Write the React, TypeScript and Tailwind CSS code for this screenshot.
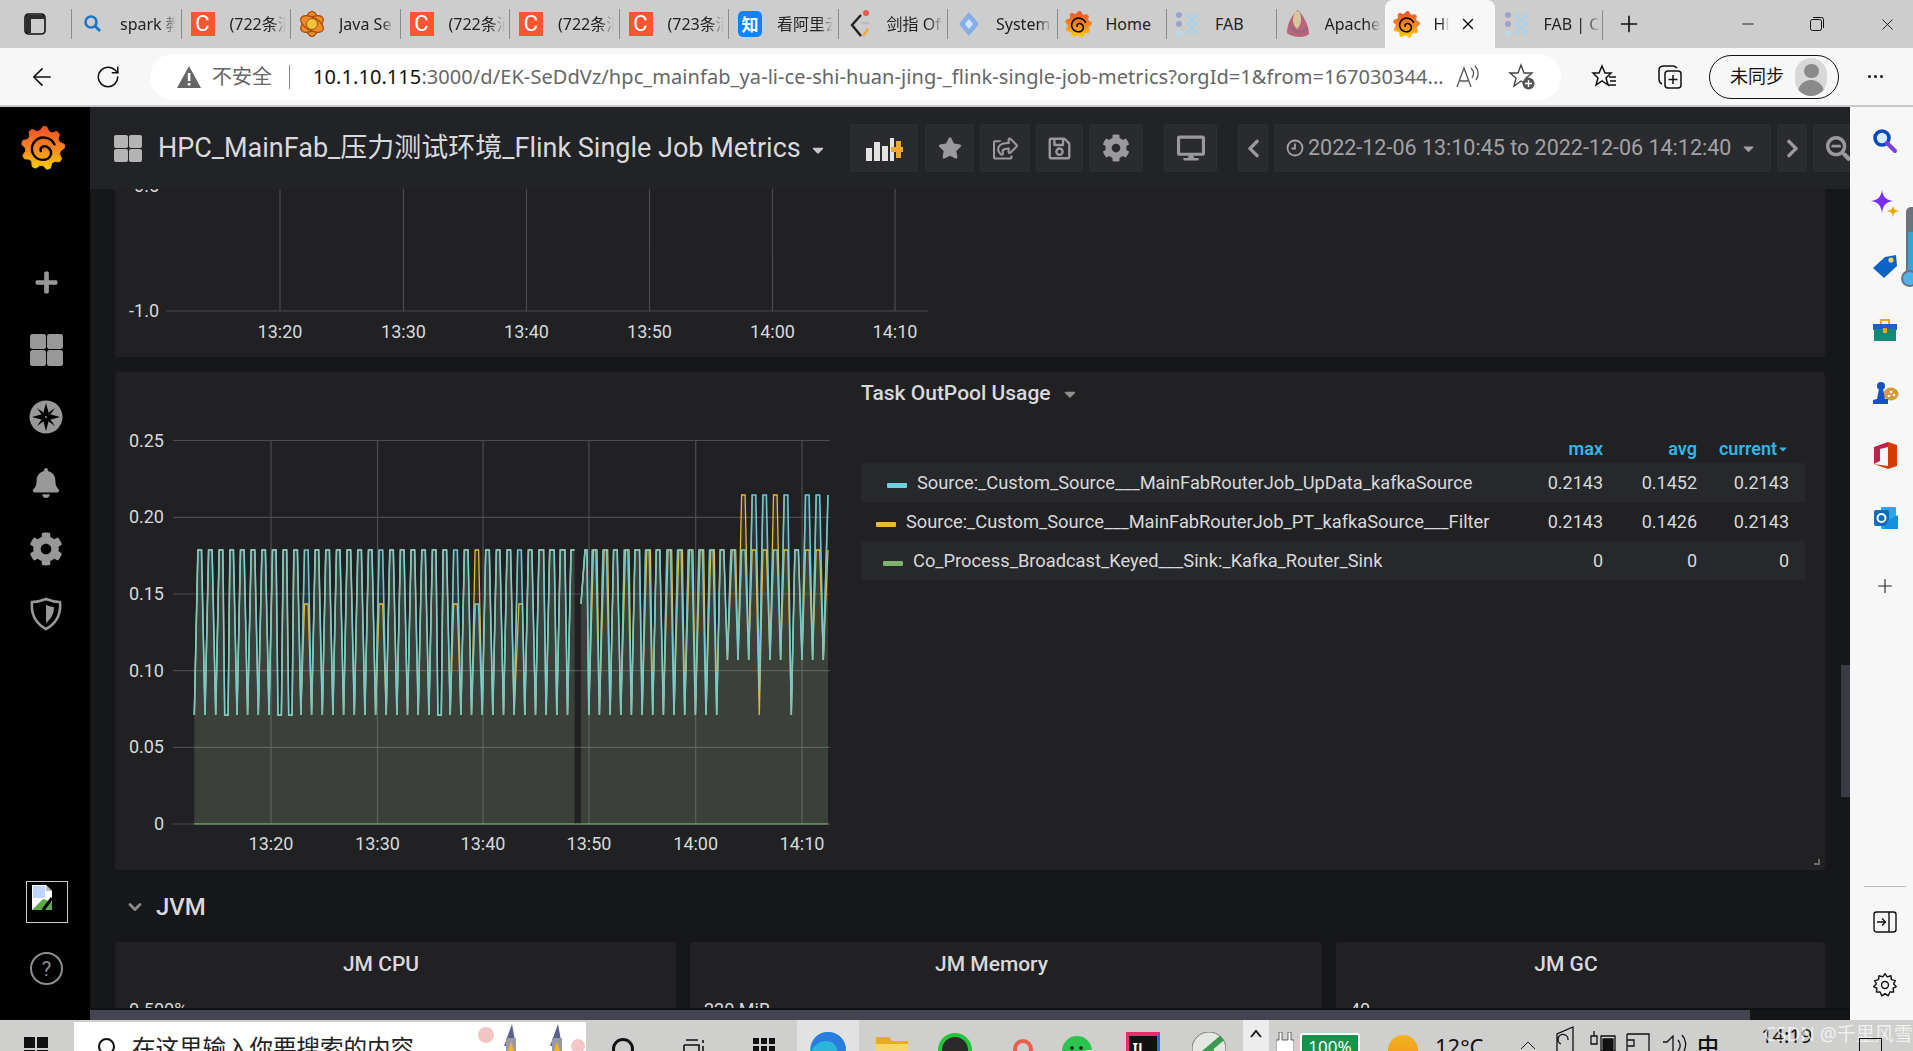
import React from "react";
import { ArrowLeft, RotateCw, Plus, Minus, X, ChevronDown } from "lucide-react";
import { FaStar, FaRegShareSquare, FaRegSave, FaCog, FaDesktop, FaChevronLeft, FaChevronRight, FaSearchMinus, FaBell, FaPlus, FaCaretDown } from "react-icons/fa";

const P = 10.66, X0 = 194.35, YL = 715, YH = 550, YM = 604, YT = 495, YL2 = 660;
const lowPlateau = new Set([3, 8, 9, 23]);
const yShift = new Set([30, 37, 38, 40, 42, 44, 45, 46, 47, 48, 50]);
const wide = new Set([32, 33, 34, 41]);

type Pt = [number, number];
function series(kind: "c" | "y"): Pt[][] {
  const a: Pt[] = [];
  const b: Pt[] = [];
  for (let k = 0; k < 60; k++) {
    if (k === 36) continue;
    const target = k < 36 ? a : b;
    const x = X0 + k * P;
    let low = k >= 50 && k !== 53 && k !== 56 ? YL2 : YL;
    if (kind === "c" && k === 53) low = 690;
    let hi = YH;
    if (kind === "c" && [52, 53, 55, 57, 58, 59].includes(k)) hi = YT;
    if (kind === "y" && [51, 54].includes(k)) hi = YT;
    if (kind === "y" && [10, 17, 24, 30].includes(k)) hi = YM;
    if (kind === "c" && k === 26) hi = YM;
    if (k === 37) b.push([581, YM], [585, YH], [587, YH]);
    if (lowPlateau.has(k)) target.push([x - 1.6, low], [x + 1.8, low]);
    else target.push([x, low]);
    const s = kind === "y" && yShift.has(k) ? 1.2 : 0;
    if (k === 59) {
      target.push([828, hi]);
    } else {
      target.push([x + P / 3 + s, hi], [x + (2 * P) / 3 + s + (wide.has(k) ? 1 : 0), hi]);
    }
  }
  return [a, b];
}
const OX = 115, OY = 372;
const toLine = (pts: Pt[]) => pts.map(([x, y]) => `${(x - OX).toFixed(1)},${y - OY}`).join(" ");
const toArea = (pts: Pt[]) =>
  `${(pts[0][0] - OX).toFixed(1)},${824 - OY} ${toLine(pts)} ${(pts[pts.length - 1][0] - OX).toFixed(1)},${824 - OY}`;
const rising = (pts: Pt[]) => {
  let d = "";
  for (let i = 1; i < pts.length; i++) {
    if (pts[i][1] < pts[i - 1][1]) d += `M${(pts[i - 1][0] - OX).toFixed(1)} ${pts[i - 1][1] - OY}L${(pts[i][0] - OX).toFixed(1)} ${pts[i][1] - OY}`;
  }
  return d;
};

function TaskChart() {
  const cyan = series("c");
  const yellow = series("y");
  const ys: [string, number][] = [["0.25", 440.5], ["0.20", 517.3], ["0.15", 594], ["0.10", 670.7], ["0.05", 747.3], ["0", 824]];
  const xs: [string, number][] = [["13:20", 271], ["13:30", 377.5], ["13:40", 483], ["13:50", 589], ["14:00", 695.7], ["14:10", 802]];
  return (
    <svg width="740" height="498" className="shrink-0">
      {ys.map(([t, y]) => (
        <g key={t}>
          <line x1={173 - OX} x2={830 - OX} y1={y - OY} y2={y - OY} stroke="#4c4c4e" strokeWidth="1.2" />
          <text x={164 - OX} y={y - OY + 6} textAnchor="end" fontSize="18" fill="#d8d9da">{t}</text>
        </g>
      ))}
      {xs.map(([t, x]) => (
        <g key={t}>
          <line x1={x - OX} x2={x - OX} y1={441 - OY} y2={824 - OY} stroke="#4c4c4e" strokeWidth="1.2" />
          <text x={x - OX} y={850 - OY} textAnchor="middle" fontSize="18" fill="#d8d9da">{t}</text>
        </g>
      ))}
      {yellow.map((p, i) => <polygon key={i} points={toArea(p)} fill="#eab839" fillOpacity="0.1" />)}
      {cyan.map((p, i) => <polygon key={i} points={toArea(p)} fill="#6ed0e0" fillOpacity="0.11" />)}
      {yellow.map((p, i) => <polyline key={i} points={toLine(p)} fill="none" stroke="#eab839" strokeWidth="1.3" />)}
      {cyan.map((p, i) => <polyline key={i} points={toLine(p)} fill="none" stroke="#6ed0e0" strokeWidth="1.6" strokeOpacity="0.95" />)}
      {cyan.map((p, i) => <path key={i} d={rising(p)} fill="none" stroke="#7fc4ae" strokeWidth="1.3" strokeOpacity="0.75" />)}
      <line x1={194 - OX} x2={828 - OX} y1={824 - OY} y2={824 - OY} stroke="#7eb26d" strokeWidth="1.2" />
    </svg>
  );
}

function TopChart() {
  const xs: [string, number][] = [["13:20", 280], ["13:30", 403.5], ["13:40", 526.5], ["13:50", 649.5], ["14:00", 772.5], ["14:10", 895]];
  return (
    <svg width="900" height="168">
      <text x="44" y="3" textAnchor="end" fontSize="18" fill="#d8d9da">-0.5</text>
      <text x="44" y="128" textAnchor="end" fontSize="18" fill="#d8d9da">-1.0</text>
      <line x1="51" x2="813" y1="122" y2="122" stroke="#4c4c4e" strokeWidth="1.2" />
      {xs.map(([t, x]) => (
        <g key={t}>
          <line x1={x - 115} x2={x - 115} y1="0" y2="122" stroke="#4c4c4e" strokeWidth="1.2" />
          <text x={x - 115} y="149" textAnchor="middle" fontSize="18" fill="#d8d9da">{t}</text>
        </g>
      ))}
    </svg>
  );
}

function GrafanaLogo({ size, id }: { size: number; id: string }) {
  const pts: string[] = [];
  const n = 9;
  for (let i = 0; i < n * 4; i++) {
    const a = (i / (n * 4)) * Math.PI * 2 - Math.PI / 2;
    const r = i % 4 === 0 || i % 4 === 1 ? 49 : 40;
    pts.push(`${(50 + r * Math.cos(a)).toFixed(1)},${(50 + r * Math.sin(a)).toFixed(1)}`);
  }
  return (
    <svg width={size} height={size} viewBox="0 0 100 100">
      <defs>
        <linearGradient id={id} x1="0" y1="0" x2="0" y2="1">
          <stop offset="0" stopColor="#f0512a" />
          <stop offset="0.55" stopColor="#f68a1f" />
          <stop offset="1" stopColor="#fcd00a" />
        </linearGradient>
      </defs>
      <polygon points={pts.join(" ")} fill={`url(#${id})`} stroke={`url(#${id})`} strokeWidth="2" strokeLinejoin="round" />
      <path d="M76 42 C68 24 42 20 29 38 C18 56 30 77 50 77 C67 77 74 60 63 50 C54 42 42 47 45 57" fill="none" stroke="#000" strokeWidth="5.5" strokeLinecap="round" />
    </svg>
  );
}

function GridIcon({ cls, gap }: { cls: string; gap: string }) {
  return (
    <div className={`grid grid-cols-2 ${gap}`}>
      <span className={cls} />
      <span className={cls} />
      <span className={cls} />
      <span className={cls} />
    </div>
  );
}

function CIcon() {
  return <div className="w-6 h-6 bg-[#fc5531] flex items-center justify-center text-white text-[22px] leading-none font-[Roboto,sans-serif]">C</div>;
}
function FabIcon() {
  return (
    <svg width="24" height="26" viewBox="0 0 24 26">
      <circle cx="3" cy="4" r="3" fill="#9aa3c9" />
      <circle cx="3" cy="13" r="3" fill="#9aa3c9" />
      <circle cx="3" cy="22" r="3" fill="#b9d7e6" />
      {[[12, 5], [20, 5], [12, 13], [20, 13], [12, 21], [20, 21], [16, 9], [16, 17]].map(([x, y], i) => (
        <circle key={i} cx={x} cy={y} r="2.4" fill="#a9d3e6" />
      ))}
    </svg>
  );
}
function TabIcon({ t, id }: { t: string; id?: string }) {
  if (t === "search")
    return (
      <svg width="20" height="20" viewBox="0 0 20 20">
        <circle cx="8" cy="8" r="5.5" fill="none" stroke="#1b76c9" strokeWidth="2.6" />
        <path d="M12 12 L17 17" stroke="#1b76c9" strokeWidth="2.8" />
      </svg>
    );
  if (t === "c") return <CIcon />;
  if (t === "java")
    return (
      <svg width="24" height="26" viewBox="0 0 24 26">
        {[0, 60, 120].map((r) => (
          <ellipse key={r} cx="12" cy="13" rx="6.5" ry="12.5" fill="#f08a2a" stroke="#a8480f" strokeWidth="1.2" transform={`rotate(${r} 12 13)`} />
        ))}
        <circle cx="12" cy="13" r="5.5" fill="#f6c23a" stroke="#8a5a14" />
      </svg>
    );
  if (t === "zhi")
    return <div className="w-6 h-[26px] rounded-[5px] bg-[#0a84ff] flex items-center justify-center text-white text-[17px] leading-none font-bold">知</div>;
  if (t === "jz")
    return (
      <svg width="22" height="30" viewBox="0 0 22 30">
        <path d="M12 6 L3 16 L12 27" fill="none" stroke="#222" strokeWidth="2.4" />
        <circle cx="17" cy="4" r="3" fill="#e8574a" />
        <path d="M12 14 H20" stroke="#bbb" strokeWidth="2.4" />
        <path d="M14 27 L19 20" stroke="#f0a83a" strokeWidth="2.6" />
      </svg>
    );
  if (t === "sys")
    return (
      <svg width="22" height="26" viewBox="0 0 22 26">
        <path d="M11 1 L21 13 L11 25 L1 13 Z" fill="#84aee8" />
        <path d="M11 8 L15 13 L11 18 L7 13 Z" fill="#d4e3f8" />
      </svg>
    );
  if (t === "graf") return <GrafanaLogo size={27} id={id || "tg"} />;
  if (t === "fab") return <FabIcon />;
  if (t === "apache")
    return (
      <svg width="26" height="30" viewBox="0 0 26 30">
        <path d="M13 1 C7 6 2 14 2 24 C8 29 20 29 24 25 C24 16 18 6 13 1 Z" fill="#b8657c" />
        <path d="M10 3 C7 10 7 15 12 20 C17 15 17 8 14 2 Z" fill="#d8c69a" />
        <path d="M6 18 C10 24 16 24 22 20" fill="none" stroke="#8f6a86" strokeWidth="2" />
      </svg>
    );
  return null;
}

const tabs = [
  { i: "search", t: "spark 教程" },
  { i: "c", t: "(722条消息)" },
  { i: "java", t: "Java Se 8" },
  { i: "c", t: "(722条消息)" },
  { i: "c", t: "(722条消息)" },
  { i: "c", t: "(723条消息)" },
  { i: "zhi", t: "看阿里云" },
  { i: "jz", t: "剑指 Off" },
  { i: "sys", t: "System" },
  { i: "graf", t: "Home" },
  { i: "fab", t: "FAB" },
  { i: "apache", t: "Apache" },
];

function Tab({ i, t, fade = true, sep = true, id }: { i: string; t: string; fade?: boolean; sep?: boolean; id?: string }) {
  return (
    <div className="w-[109.5px] h-12 shrink-0 flex items-center relative">
      {sep ? <span className="w-px h-[30px] bg-[#8b8b8b] shrink-0" /> : <span className="w-px shrink-0" />}
      <span className="w-[42px] flex justify-center shrink-0"><TabIcon t={i} id={id} /></span>
      <span className={`ml-[6px] w-[56px] overflow-hidden whitespace-nowrap text-[16px] text-[#222] ${fade ? "[mask-image:linear-gradient(90deg,#000_75%,transparent)]" : ""}`}>{t}</span>
    </div>
  );
}

function TabBar() {
  return (
    <div className="h-12 bg-[#cdcdcd] flex items-start shrink-0 [font-family:'Noto_Sans','Noto_Sans_CJK_SC',sans-serif]">
      <div className="w-[71px] h-12 flex items-center justify-center shrink-0">
        <svg width="24" height="24" viewBox="0 0 24 24" fill="none" className="mr-[1px]">
          <rect x="2" y="2" width="20" height="20" rx="3.5" stroke="#111" strokeWidth="1.6" />
          <path d="M3 3 H21 V7 H3 Z M3 7 H8 V21 H3 Z" fill="#111" fillOpacity="0.85" />
        </svg>
      </div>
      {tabs.map((x, n) => <Tab key={n} i={x.i} t={x.t} id={`tg${n}`} fade={x.t !== "Home" && x.t !== "FAB"} />)}
      <div className="w-[110px] h-12 bg-[#f7f7f7] rounded-t-[8px] flex items-center shrink-0 -ml-[0.5px] [font-family:'Noto_Sans',sans-serif]">
        <span className="w-[42px] flex justify-center shrink-0 ml-[1px]"><TabIcon t="graf" id="tgActive" /></span>
        <span className="ml-[6px] w-[15px] overflow-hidden whitespace-nowrap text-[16px] text-[#222] [mask-image:linear-gradient(90deg,#000_50%,transparent)]">HPC</span>
        <X size={18} strokeWidth={1.8} className="text-[#111] ml-[10px]" />
      </div>
      <Tab i="fab" t="FAB | Conf" sep={false} />
      <span className="w-px h-[30px] bg-[#8b8b8b] mt-[10px] -ml-[2px] shrink-0" />
      <Plus size={26} strokeWidth={1.5} className="text-[#111] ml-[13px] mt-[11px] shrink-0" />
      <Minus size={18} strokeWidth={1.2} className="text-[#111] ml-[97px] mt-[15px] shrink-0" />
      <svg width="16" height="16" viewBox="0 0 16 16" fill="none" className="ml-[52px] mt-[16px] shrink-0">
        <rect x="1.5" y="3.5" width="11" height="11" rx="2" stroke="#111" />
        <path d="M4 1.5 H12.5 A2 2 0 0 1 14.5 3.5 V12" stroke="#111" />
      </svg>
      <X size={19} strokeWidth={1.1} className="text-[#111] ml-[53px] mt-[15px] shrink-0" />
    </div>
  );
}

function AddressBar() {
  return (
    <div className="h-[57px] bg-[#f7f7f7] flex items-center shrink-0 [font-family:'Noto_Sans','Noto_Sans_CJK_SC',sans-serif]">
      <ArrowLeft size={28} strokeWidth={1.4} className="text-[#111] ml-[28px] shrink-0" />
      <RotateCw size={26} strokeWidth={1.4} className="text-[#111] ml-[39px] shrink-0" />
      <div className="ml-[29px] w-[1411px] h-[46px] rounded-full bg-white flex items-center shrink-0">
        <svg width="26" height="24" viewBox="0 0 26 24" className="ml-[26px] shrink-0">
          <path d="M13 1 L25 23 H1 Z" fill="#666" />
          <rect x="11.8" y="8" width="2.6" height="8" fill="#fff" />
          <rect x="11.8" y="18" width="2.6" height="2.6" fill="#fff" />
        </svg>
        <span className="ml-[10px] text-[20px] text-[#666] whitespace-nowrap">不安全</span>
        <span className="ml-[17px] w-px h-[24px] bg-[#888]" />
        <span className="ml-[23px] w-[1132px] shrink-0 text-[20px] whitespace-nowrap overflow-hidden text-[#666] tracking-[0.07px]">
          <span className="text-[#111]">10.1.10.115</span>:3000/d/EK-SeDdVz/hpc_mainfab_ya-li-ce-shi-huan-jing-_flink-single-job-metrics?orgId=1&amp;from=167030344...
        </span>
        <svg width="26" height="24" viewBox="0 0 26 24" fill="none" stroke="#555" strokeWidth="1.3" className="ml-[10px] shrink-0">
          <path d="M2 22 L9 3 L16 22 M5 16 H13" />
          <path d="M16 3 C19 6 19 10 17 13 M20 1 C24 5 24 11 21 15" />
        </svg>
        <svg width="28" height="28" viewBox="0 0 28 28" fill="none" stroke="#444" strokeWidth="1.4" className="ml-[27px] shrink-0">
          <path d="M13 2 L16 10 H24 L18 15 L20 23 L13 18 L6 23 L8 15 L2 10 H10 Z" />
          <circle cx="20.5" cy="20.5" r="6" fill="#555" stroke="none" />
          <path d="M20.5 17 V24 M17 20.5 H24" stroke="#fff" />
        </svg>
      </div>
      <svg width="28" height="28" viewBox="0 0 28 28" fill="none" stroke="#111" strokeWidth="1.5" className="ml-[29px] shrink-0">
        <path d="M12 3 L15 10 H21 L16 15 L18 22 L12 18 L6 22 L8 15 L3 10 H9 Z" />
        <path d="M19 14 H26 M20 18 H26 M18 22 H26" />
      </svg>
      <svg width="28" height="28" viewBox="0 0 28 28" fill="none" stroke="#111" strokeWidth="1.5" className="ml-[38px] shrink-0">
        <rect x="9" y="8" width="16" height="17" rx="3" />
        <path d="M6 21 C4 20 3 18 3 16 V7 C3 4 5 3 8 3 H17 C19 3 20 4 21 5" />
        <path d="M17 12 V21 M12.5 16.5 H21.5" />
      </svg>
      <div className="ml-[25px] w-[130px] h-[44px] rounded-full border-[1.5px] border-[#111] flex items-center shrink-0">
        <span className="ml-[20px] text-[18px] text-[#111] whitespace-nowrap">未同步</span>
        <span className="ml-[11px] w-[32px] h-[38px] rounded-full bg-[#d8d8d8] flex flex-col items-center justify-start overflow-hidden">
          <span className="w-[15px] h-[15px] rounded-full bg-[#8a8a8a] mt-[6px]" />
          <span className="w-[26px] h-[16px] rounded-t-full bg-[#8a8a8a] mt-[2px]" />
        </span>
      </div>
      <span className="ml-[29px] flex gap-[3px] shrink-0">
        <span className="w-[3px] h-[3px] rounded-full bg-[#111]" />
        <span className="w-[3px] h-[3px] rounded-full bg-[#111]" />
        <span className="w-[3px] h-[3px] rounded-full bg-[#111]" />
      </span>
    </div>
  );
}

function Compass() {
  return (
    <svg width="34" height="34" viewBox="0 0 34 34">
      <circle cx="17" cy="17" r="16.5" fill="#989898" />
      <path d="M17 3 L20 14 L31 17 L20 20 L17 31 L14 20 L3 17 L14 14 Z" fill="#000" />
      <path d="M8 8 L15 13 L13 15 Z M26 8 L21 15 L19 13 Z M8 26 L13 19 L15 21 Z M26 26 L19 21 L21 19 Z" fill="#000" />
      <circle cx="17" cy="17" r="1" fill="#989898" />
    </svg>
  );
}
function Shield() {
  return (
    <svg width="32" height="34" viewBox="0 0 32 34">
      <path d="M16 2 C21 4 26 5 30 5 C31 16 27 26 16 32 C5 26 1 16 2 5 C6 5 11 4 16 2 Z" fill="none" stroke="#989898" strokeWidth="2.6" />
      <path d="M16 8 C19 9 22 10 24 10 C24 17 21 22 16 26 Z" fill="#989898" />
    </svg>
  );
}

function SideNav() {
  const cell = "flex items-center justify-center shrink-0 text-[#989898] pl-[2px]";
  return (
    <div className="w-[90px] bg-black flex flex-col items-stretch shrink-0">
      <div className="mt-[19px] flex justify-center pr-[4px]"><GrafanaLogo size={44} id="logo-main" /></div>
      <div className="mt-[78px]" />
      <div className={`${cell} h-[68px]`}><FaPlus size={25} /></div>
      <div className={`${cell} h-[67px]`}><GridIcon cls="w-[16px] h-[15.5px] bg-[#989898] rounded-[2.5px]" gap="gap-[1px]" /></div>
      <div className={`${cell} h-[67px]`}><Compass /></div>
      <div className={`${cell} h-[66px]`}><FaBell size={30} /></div>
      <div className={`${cell} h-[65px]`}><FaCog size={34} /></div>
      <div className={`${cell} h-[66px]`}><Shield /></div>
      <div className="mt-auto flex flex-col items-center pb-[35px] pl-[3px]">
        <div className="w-[42px] h-[42px] border border-[#ccc] p-[2px]">
          <svg width="26" height="28" viewBox="0 0 26 28">
            <path d="M3 1 H17 L23 7 V26 H3 Z" fill="#fff" />
            <path d="M17 1 L23 7 H17 Z" fill="#bbb" />
            <path d="M4 2 H16 V14 H4 Z" fill="#bcd4f5" />
            <path d="M3 26 L14 15 L23 18 V26 Z" fill="#5fa84a" />
            <path d="M14 26 L23 14" stroke="#000" strokeWidth="3" />
          </svg>
        </div>
        <div className="mt-[29px] w-[33px] h-[33px] rounded-full border-2 border-[#8e8e8e] flex items-center justify-center text-[#8e8e8e] text-[20px] leading-none">?</div>
      </div>
    </div>
  );
}

const btn = "h-12 rounded-[3px] bg-[#2a2b2e] border border-[#2e2f32] flex items-center justify-center text-[#9a9a9c] shrink-0";

function NavBar() {
  return (
    <div className="h-[82px] bg-[#212327] flex items-center shrink-0 overflow-hidden">
      <div className="ml-[24px] w-[28px] shrink-0"><GridIcon cls="w-[13.5px] h-[13px] bg-[#b4b4b4] rounded-[2px]" gap="gap-[1px]" /></div>
      <div className="ml-[16px] w-[692px] shrink-0 flex items-center text-[#d8d9da]">
        <span className="text-[27px] whitespace-nowrap">HPC_MainFab_压力测试环境_Flink Single Job Metrics</span>
        <FaCaretDown size={18} className="ml-[8px] mt-[4px] text-[#c8c8c8]" />
      </div>
      <div className={`${btn} w-[68px]`}>
        <svg width="38" height="28" viewBox="0 0 38 28">
          <path d="M1 14 H7 V27 H1 Z M9 8 H15 V27 H9 Z M17 12 H23 V27 H17 Z M25 4 H29 V27 H25 Z" fill="#e3e3e3" />
          <path d="M26 13 H31 V7 H36 V13 H38 V18 H36 V24 H31 V18 H26 Z" fill="#f0a82e" />
        </svg>
      </div>
      <div className={`${btn} w-[49px] ml-[7px]`}><FaStar size={24} /></div>
      <div className={`${btn} w-[50px] ml-[6px]`}><FaRegShareSquare size={25} /></div>
      <div className={`${btn} w-[47px] ml-[6px]`}><FaRegSave size={25} /></div>
      <div className={`${btn} w-[54px] ml-[6px]`}><FaCog size={28} /></div>
      <div className={`${btn} w-[53px] ml-[21px]`}><FaDesktop size={28} /></div>
      <div className={`${btn} w-[30px] ml-[21px]`}><FaChevronLeft size={21} /></div>
      <div className={`${btn} w-[497px] ml-[6px] !justify-start`}>
        <svg width="18" height="18" viewBox="0 0 18 18" fill="none" stroke="#a2a2a4" strokeWidth="1.8" className="ml-[11px] shrink-0">
          <circle cx="9" cy="9" r="7.5" />
          <path d="M9 4.5 V9.5 H5.5" />
        </svg>
        <span className="ml-[4px] text-[21.5px] text-[#a2a2a4] whitespace-nowrap">2022-12-06 13:10:45 to 2022-12-06 14:12:40</span>
        <FaCaretDown size={17} className="ml-[9px] text-[#a2a2a4]" />
      </div>
      <div className={`${btn} w-[30px] ml-[6px]`}><FaChevronRight size={21} /></div>
      <div className={`${btn} w-[60px] ml-[6px] !justify-start pl-[12px]`}><FaSearchMinus size={25} /></div>
    </div>
  );
}

const legend = [
  { c: "bg-[#6ed0e0]", n: "Source:_Custom_Source___MainFabRouterJob_UpData_kafkaSource", max: "0.2143", avg: "0.1452", cur: "0.2143", pl: "pl-[26px]", bg: "bg-[#27282b]" },
  { c: "bg-[#eab839]", n: "Source:_Custom_Source___MainFabRouterJob_PT_kafkaSource___Filter", max: "0.2143", avg: "0.1426", cur: "0.2143", pl: "pl-[15px]", bg: "" },
  { c: "bg-[#7eb26d]", n: "Co_Process_Broadcast_Keyed___Sink:_Kafka_Router_Sink", max: "0", avg: "0", cur: "0", pl: "pl-[22px]", bg: "bg-[#27282b]" },
];

function Legend() {
  return (
    <div className="flex-1 pl-[6px] pr-[20px] text-[#d8d9da] text-[18px]">
      <div className="h-[44px] flex items-center">
        <span className="text-[21px] font-medium">Task OutPool Usage</span>
        <FaCaretDown size={18} className="ml-[10px] text-[#8e8e8e]" />
      </div>
      <div className="h-[47px] flex items-end justify-end pr-[16px] pb-[1px] text-[#33b5e5] font-semibold">
        <span className="w-[60px] text-right">max</span>
        <span className="w-[94px] text-right">avg</span>
        <span className="w-[92px] flex items-center justify-end"><span>current</span><FaCaretDown size={12} /></span>
      </div>
      {legend.map((r) => (
        <div key={r.n} className={`h-[39px] flex items-center ${r.bg}`}>
          <div className={`w-[648px] shrink-0 flex items-center ${r.pl}`}>
            <span className={`w-[20px] h-[5px] rounded-[1px] mt-[5px] shrink-0 ${r.c}`} />
            <span className="ml-[10px] whitespace-nowrap text-[18.3px]">{r.n}</span>
          </div>
          <span className="w-[94px] text-right">{r.max}</span>
          <span className="w-[94px] text-right">{r.avg}</span>
          <span className="w-[92px] text-right">{r.cur}</span>
        </div>
      ))}
    </div>
  );
}

function SmallPanel({ w, title, val }: { w: string; title: string; val: string }) {
  return (
    <div className={`${w} shrink-0 h-[66px] bg-[#212124] rounded-t-[3px] relative overflow-hidden`}>
      <div className="text-center text-[21px] font-medium text-[#d8d9da] pt-[7px] pr-[29px]">{title}</div>
      <div className="absolute left-[14px] top-[59px] text-[18px] leading-none text-[#d8d9da]">{val}</div>
    </div>
  );
}

function Content() {
  return (
    <div className="flex-1 bg-[#161719] overflow-hidden pl-[25px] pr-[25px] relative">
      <div className="h-[168px] bg-[#212124] rounded-b-[3px] overflow-hidden"><TopChart /></div>
      <div className="mt-[15px] h-[498px] bg-[#212124] rounded-[3px] flex relative">
        <TaskChart />
        <Legend />
        <span className="absolute right-[5px] bottom-[5px] w-[6px] h-[6px] border-r-2 border-b-2 border-[#6a6a6a]" />
      </div>
      <div className="h-[72px] flex items-center pt-[2px] text-[#d8d9da]">
        <ChevronDown size={20} strokeWidth={3.5} className="text-[#8a8a8a] ml-[10px]" />
        <span className="ml-[11px] text-[24px] font-medium leading-none">JVM</span>
      </div>
      <div className="flex gap-[14px]">
        <SmallPanel w="w-[561px]" title="JM CPU" val="0.500%" />
        <SmallPanel w="w-[632px]" title="JM Memory" val="220 MiB" />
        <SmallPanel w="w-[489px]" title="JM GC" val="40" />
      </div>
      <span className="absolute right-0 top-[476px] w-[9px] h-[132px] bg-[#3a3b44]" />
    </div>
  );
}

function RS({ children }: { children: React.ReactNode }) {
  return <div className="h-[62.8px] flex items-center justify-center shrink-0 pl-[7px]">{children}</div>;
}

function RightBar() {
  return (
    <div className="w-[63px] bg-[#f7f7f7] flex flex-col shrink-0 relative pt-[3px] overflow-hidden">
      <RS>
        <svg width="26" height="26" viewBox="0 0 26 26">
          <circle cx="10" cy="10" r="7" fill="#d7ecff" stroke="#0d47c0" strokeWidth="3.6" />
          <path d="M15 15 L23 23" stroke="#7b3fd6" strokeWidth="4" strokeLinecap="round" />
        </svg>
      </RS>
      <RS>
        <svg width="28" height="28" viewBox="0 0 28 28">
          <path d="M11 0 C12 7 15 10 22 11 C15 12 12 15 11 23 C10 15 7 12 0 11 C7 10 10 7 11 0 Z" fill="#7a2ff0" />
          <path d="M22 15 C22.5 19 23.5 20 28 21 C23.5 22 22.5 23 22 28 C21.5 23 20.5 22 16 21 C20.5 20 21.5 19 22 15 Z" fill="#f0a400" />
        </svg>
      </RS>
      <RS>
        <svg width="26" height="26" viewBox="0 0 26 26">
          <path d="M1 14 L13 3 L24 1 L25 12 L12 24 Z" fill="#0c63c7" />
          <circle cx="19" cy="6" r="2.6" fill="#f7d15a" />
        </svg>
      </RS>
      <RS>
        <svg width="26" height="24" viewBox="0 0 26 24">
          <path d="M9 6 V2 H17 V6" fill="none" stroke="#e8a91c" strokeWidth="2" />
          <rect x="1" y="6" width="24" height="6" fill="#1c5fc9" />
          <rect x="2" y="11" width="22" height="12" fill="#12897b" />
          <rect x="11" y="10" width="4" height="5" fill="#f1a51c" />
        </svg>
      </RS>
      <RS>
        <svg width="28" height="24" viewBox="0 0 28 24">
          <ellipse cx="20" cy="13" rx="7.5" ry="6.5" fill="#d69a3a" />
          <circle cx="10" cy="5" r="4" fill="#1553c4" />
          <path d="M8 8 H12 L14 18 H17 V23 H2 V19 L6 18 Z" fill="#1553c4" />
          <circle cx="20" cy="11" r="1.3" fill="#fff" /><circle cx="23" cy="14" r="1.3" fill="#fff" /><circle cx="18" cy="15" r="1.3" fill="#fff" />
        </svg>
      </RS>
      <RS>
        <svg width="24" height="29" viewBox="0 0 24 29">
          <path d="M15 1 L24 4 V25 L15 28 L1 23 L15 25 Z" fill="#d83b01" />
          <path d="M15 1 L1 6 V23 L7 20 V8 L15 6 Z" fill="#c4204c" />
        </svg>
      </RS>
      <RS>
        <svg width="25" height="24" viewBox="0 0 25 24">
          <rect x="8" y="1" width="15" height="22" rx="1" fill="#28a8ea" />
          <rect x="1" y="4" width="15" height="16" rx="2" fill="#0f6cbd" />
          <circle cx="8.5" cy="12" r="4" fill="none" stroke="#fff" strokeWidth="2" />
          <path d="M16 14 L25 9 V23 H10 Z" fill="#1490df" />
        </svg>
      </RS>
      <div className="h-[72px] flex items-center justify-center shrink-0 pl-[7px]"><Plus size={22} strokeWidth={1.2} className="text-[#222]" /></div>
      <div className="mt-auto flex flex-col items-center pl-[7px]">
        <span className="w-[42px] h-px bg-[#bdbdbd] mb-[7px]" />
        <div className="h-[56px] flex items-center justify-center">
          <svg width="24" height="24" viewBox="0 0 24 24" fill="none" stroke="#111" strokeWidth="1.4">
            <rect x="1" y="2" width="22" height="20" rx="2.5" />
            <path d="M16 2 V22 M4 12 H12 M9 8.5 L12.5 12 L9 15.5" />
          </svg>
        </div>
        <div className="h-[70px] flex items-center justify-center">
          <svg width="26" height="26" viewBox="0 0 24 24" fill="none" stroke="#111" strokeWidth="1.3">
            <circle cx="12" cy="12" r="3.2" />
            <path d="M12 1.5 L14 4.5 L17.5 3.5 L18 7 L21.5 8 L20 11 L22.5 13.5 L19.5 15 L20 18.5 L16.5 18.5 L15 22 L12 20 L9 22 L7.5 18.5 L4 18.5 L4.5 15 L1.5 13.5 L4 11 L2.5 8 L6 7 L6.5 3.5 L10 4.5 Z" strokeLinejoin="round" />
          </svg>
        </div>
      </div>
      <div className="absolute left-[56px] top-[100px] w-[12px] h-[72px] rounded-[5px] bg-[#68737a] pl-[2px] pt-[25px]">
        <span className="block w-[8px] h-[50px] bg-[#37a3dd]" />
      </div>
      <span className="absolute left-[51px] top-[163px] w-[17px] h-[17px] rounded-full bg-[#4fb3e6] border-2 border-[#68737a]" />
    </div>
  );
}

function TaskBar() {
  const ico = "shrink-0 flex justify-center pt-[16px]";
  return (
    <div className="h-[31px] bg-[#cfcfcd] flex items-start overflow-hidden shrink-0 relative [font-family:'Noto_Sans','Noto_Sans_CJK_SC',sans-serif]">
      <div className={`w-[74px] ${ico} !pt-[17px] pr-[2px]`}>
        <div className="grid grid-cols-2 gap-[2px]">
          <span className="w-[11px] h-[11px] bg-[#111]" /><span className="w-[11px] h-[11px] bg-[#111]" />
          <span className="w-[11px] h-[11px] bg-[#111]" /><span className="w-[11px] h-[11px] bg-[#111]" />
        </div>
      </div>
      <div className="w-[512px] h-[29px] mt-[2px] bg-white shrink-0 flex items-start relative overflow-hidden">
        <span className="mt-[16px] ml-[24px] w-[17px] h-[17px] rounded-full border-2 border-[#111] shrink-0" />
        <span className="ml-[17px] mt-[11px] text-[23.5px] leading-[30px] text-[#222] whitespace-nowrap">在这里输入你要搜索的内容</span>
        <svg width="110" height="29" viewBox="0 0 110 29" className="absolute right-[0px] top-0">
          <circle cx="10" cy="13" r="8" fill="#f2c6c4" />
          <path d="M36 2 L40 24 H28 Z M82 2 L86 24 H74 Z" fill="#5b5f8e" />
          <rect x="30" y="16" width="10" height="13" fill="#9a9aa6" />
          <rect x="76" y="16" width="10" height="13" fill="#9a9aa6" />
          <path d="M35 20 L38 29 H32 Z M81 20 L84 29 H78 Z" fill="#f5b51c" />
          <circle cx="102" cy="24" r="7" fill="#f2c6c4" />
        </svg>
      </div>
      <div className={`w-[74px] ${ico} !pt-[18px]`}><span className="w-[22px] h-[22px] rounded-full border-[3px] border-[#111]" /></div>
      <div className={`w-[70px] ${ico} !pt-[19px]`}>
        <svg width="24" height="12" viewBox="0 0 24 12" fill="none" stroke="#111" strokeWidth="1.6"><path d="M3 1 H15 M1 6 H16 V12 M1 6 V12 M20 1 V4 M20 7 V12" /></svg>
      </div>
      <div className={`w-[67px] ${ico} !pt-[18px]`}>
        <div className="grid grid-cols-3 gap-[2px]">
          {Array.from({ length: 9 }).map((_, i) => <span key={i} className="w-[6px] h-[6px] bg-[#111]" />)}
        </div>
      </div>
      <div className={`w-[62px] ${ico} !pt-[12px] h-[31px] bg-[#e2e2e2]`}>
        <svg width="36" height="36" viewBox="0 0 36 36">
          <circle cx="18" cy="18" r="18" fill="#2bb5d8" />
          <path d="M18 0 C30 0 36 10 36 18 C36 24 30 26 26 24 C30 16 24 8 14 9 C8 10 3 15 1 20 C0 8 8 0 18 0 Z" fill="#2c7ce0" />
          <path d="M36 18 C36 28 28 36 18 36 C14 36 10 34 8 30 C16 34 26 32 36 18 Z" fill="#5fd35a" />
          <circle cx="17" cy="24" r="5" fill="#e2e2e2" />
        </svg>
      </div>
      <div className={`w-[66px] ${ico} !pt-[17px]`}>
        <svg width="32" height="26" viewBox="0 0 32 26"><path d="M0 0 H13 L16 4 H32 V26 H0 Z" fill="#e8ad1f" /><rect y="7" width="32" height="19" fill="#f8d66b" /></svg>
      </div>
      <div className={`w-[60px] ${ico} !pt-[13px]`}><span className="w-[34px] h-[34px] rounded-full bg-[#2a2a2a] border-[4px] border-[#22c53c]" /></div>
      <div className={`w-[65px] ${ico} !pt-[17px]`}>
        <svg width="30" height="28" viewBox="0 0 30 28" fill="none"><circle cx="20" cy="12" r="8" stroke="#e8604c" strokeWidth="4" /><path d="M0 18 H12" stroke="#e8604c" strokeWidth="4" /></svg>
      </div>
      <div className={`w-[60px] ${ico} !pt-[16px]`}>
        <svg width="36" height="30" viewBox="0 0 36 30"><circle cx="15" cy="15" r="15" fill="#2dc34f" /><circle cx="10" cy="12" r="1.8" fill="#111" /><circle cx="19" cy="12" r="1.8" fill="#111" /><circle cx="27" cy="23" r="9" fill="#f3f3f3" /></svg>
      </div>
      <div className={`w-[65px] ${ico} !pt-[12px]`}>
        <div className="w-[34px] h-[34px] bg-[#111] border-t-[4px] border-l-[3px] border-r-[3px] border-t-[#ea2d6f] border-l-[#ea2d6f] border-r-[#2b6be0] text-white text-[14px] leading-none font-bold pl-[4px] pt-[5px]">IJ</div>
      </div>
      <div className={`w-[68px] ${ico} !pt-[12px]`}>
        <svg width="34" height="34" viewBox="0 0 34 34"><circle cx="17" cy="17" r="17" fill="#e4e8e0" stroke="#777" /><path d="M4 28 L30 6 M17 17 L28 30" stroke="#3b9a4e" strokeWidth="6" /></svg>
      </div>
      <div className="w-[26px] h-[31px] bg-[#ececec] shrink-0 flex justify-center pt-[9px]">
        <svg width="12" height="9" viewBox="0 0 12 9" fill="none" stroke="#111" strokeWidth="1.8"><path d="M1 8 L6 2 L11 8" /></svg>
      </div>
      <div className="w-[31px] shrink-0 flex justify-center pt-[12px]">
        <svg width="18" height="24" viewBox="0 0 18 24" fill="#fff" stroke="#444" strokeWidth="0.8"><path d="M3 0 H6 V8 H12 V0 H15 V8 H18 V24 H0 V8 H3 Z" /></svg>
      </div>
      <div className="w-[60px] h-[28px] mt-[13px] bg-[#16924a] border-2 border-white rounded-t-[3px] shrink-0 text-center text-white text-[17px] leading-[24px]">100%</div>
      <div className="w-[75px] shrink-0 flex justify-center pt-[15px] pl-[10px]"><span className="w-[30px] h-[36px] rounded-full bg-gradient-to-b from-[#f2b41c] to-[#f08a1e]" /></div>
      <div className="w-[90px] shrink-0 text-[22px] leading-[26px] pt-[13px] text-[#111] whitespace-nowrap">12°C</div>
      <div className="w-[33px] shrink-0 flex justify-start pt-[20px] -ml-[5px]">
        <svg width="16" height="10" viewBox="0 0 16 10" fill="none" stroke="#111"><path d="M1 9 L8 2 L15 9" /></svg>
      </div>
      <svg width="154" height="31" viewBox="0 0 154 31" fill="none" stroke="#111" strokeWidth="1.3" className="shrink-0 -ml-[4px]">
        <path d="M8 31 V14 L24 7 V31 M12 24 A5 5 0 1 1 19 20" />
        <path d="M42 16 H48 V24 H42 Z M45 11 V16 M52 16 H66 V31 H52 Z" />
        <path d="M54 19 H64 V31 H54 Z" fill="#111" />
        <path d="M78 14 H100 V31 M78 14 V31 M78 20 H85 V26 H78" />
        <path d="M114 22 H118 L124 16 V31 M129 20 A8 8 0 0 1 129 31 M133 15 A14 14 0 0 1 135 31" />
      </svg>
      <span className="ml-[-6px] w-[52px] text-[22px] leading-[26px] pt-[12px] text-[#111] shrink-0 font-medium">中</span>
      <span className="ml-[12px] text-[20px] leading-[26px] pt-[3px] text-[#111] shrink-0 whitespace-nowrap">14:19</span>
      <span className="absolute left-[1764px] top-[2px] text-[19px] leading-[24px] text-white/70 whitespace-nowrap">CSDN @千里风雪</span>
      <span className="absolute left-[1859px] top-[18px] w-[23px] h-[20px] border border-[#111]" />
    </div>
  );
}

export default function App() {
  return (
    <div className="w-[1913px] h-[1051px] overflow-hidden flex flex-col bg-[#f7f7f7] [font-family:Roboto,'Noto_Sans_CJK_SC',sans-serif]">
      <TabBar />
      <AddressBar />
      <div className="h-[2px] bg-[#c8c8c8] shrink-0" />
      <div className="flex flex-1 min-h-0">
        <SideNav />
        <div className="flex-1 min-w-0 flex flex-col">
          <NavBar />
          <Content />
          <div className="h-[12px] shrink-0 bg-[#141517] flex flex-col">
            <span className="h-[2px] bg-[#0f1012]" />
            <span className="h-[10px] w-[1660px] bg-[#43444f]" />
          </div>
        </div>
        <RightBar />
      </div>
      <TaskBar />
    </div>
  );
}
